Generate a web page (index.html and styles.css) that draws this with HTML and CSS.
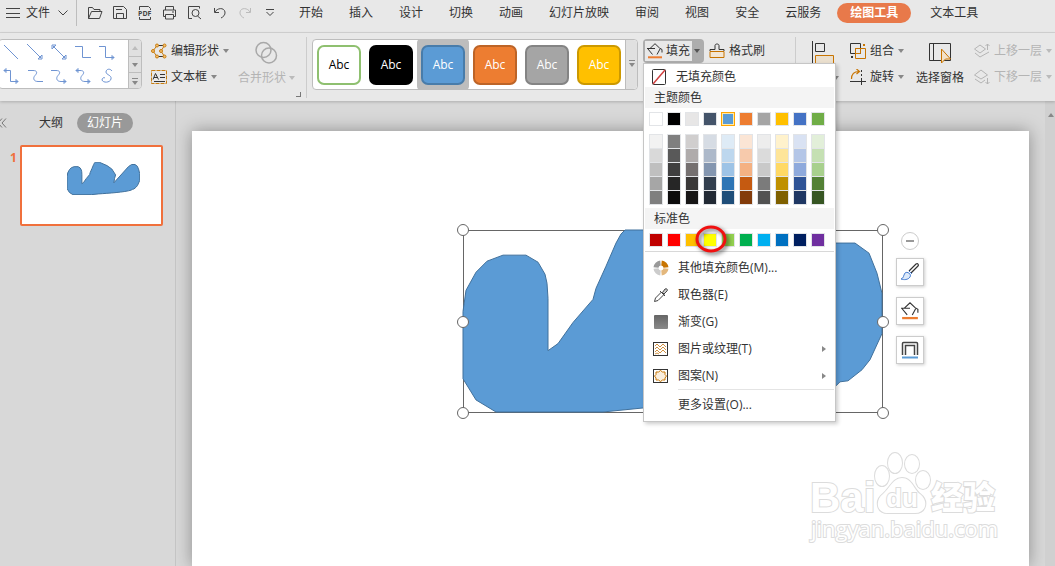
FILE: index.html
```html
<!DOCTYPE html>
<html lang="zh-CN">
<head>
  <meta charset="UTF-8">
  <meta name="viewport" content="width=device-width, initial-scale=1.0">
  <title>演示文稿</title>
  <link rel="stylesheet" href="styles.css">
</head>
<body>
  <svg class="defs" aria-hidden="true">
    <symbol id="freeform" viewBox="-1 -1 422 184" preserveAspectRatio="none">
      <path d="M0 81L3 60L13 42L24 31L40 25H63L75 32L82 44L84 53L85 68V120L95 113L110 92L130 69L133 58L143 36L153 13L158 4L162 0H185L230 19L258 38L280 71L274 90L270 115L355 24L373 13H392L406 23L414 43L419 63V103L407 129L399 139L385 150L377 151L373 155C330 168 240 173 180 177L140 181H33L13 169L0 148Z" fill="#5b9bd5" stroke="#41719c" vector-effect="non-scaling-stroke"/>
    </symbol>
    <symbol id="bucket" viewBox="0 0 16 16">
      <path d="M0 5.500h8M3 5.500L8 .7l4.500 4.300l2.500 1.500v3M13 6l-3 5.500M1 6l4.500 5.500" fill="none" stroke="#333"/>
      <path d="M1 14.300h14" stroke="#ed7d31" stroke-width="2"/>
    </symbol>
  </svg>

  <header class="menubar">
    <button class="file"><svg width="14" height="11" viewBox="0 0 14 11"><path d="M0 .5h14M0 5.500h14M0 9.500h14"/></svg>文件<svg class="file__chevron" width="10" height="6" viewBox="0 0 10 6"><path d="M.5.5L5 5L9.500.5"/></svg></button>
    <div class="quick">
      <button aria-label="打开"><svg width="16" height="14" viewBox="0 0 16 14"><path d="M1.500 12.500V1.500h4l1.500 2h6v2M1.500 12.500l3-7h10.500l-2.500 7z"/></svg></button>
      <button aria-label="保存"><svg width="16" height="14" viewBox="0 0 16 14"><path d="M1.500.5h10l3 3v9h-13zM4 3.500h6M4.500 12.500v-5h7v5"/></svg></button>
      <button aria-label="输出为PDF"><svg width="16" height="16" viewBox="0 0 16 16"><path d="M2.500 5V1.500h9l2 2V5M2.500 12v2.500h11V12"/><text x="1" y="11">PDF</text></svg></button>
      <button aria-label="打印"><svg width="16" height="14" viewBox="0 0 16 14"><path d="M3.500 4V.5h8V4M3.500 10.500h-2v-6.500h12v6.500h-2M3.500 8.500h8v4.500h-8zM10 6h2"/></svg></button>
      <button aria-label="打印预览"><svg width="16" height="14" viewBox="0 0 16 14"><path d="M5 12.500H1.500V.5h11v2M10.500 10l3.500 3"/><circle cx="8.500" cy="7" r="3.500"/></svg></button>
      <button aria-label="撤销"><svg width="14" height="12" viewBox="0 0 14 12"><path d="M1.500 1v4.500h4.500M2 5C4 1 11 0 12 5c.5 3-2 5-4 6"/></svg></button>
      <button aria-label="恢复" disabled><svg width="14" height="12" viewBox="0 0 14 12"><path d="M12.500 1v4.500H8M12 5C10 1 3 0 2 5c-.5 3 2 5 4 6"/></svg></button>
      <button aria-label="自定义快速访问工具栏"><svg width="8" height="8" viewBox="0 0 8 8"><path d="M0 .5h8M.5 3L4 6.500L7.500 3"/></svg></button>
    </div>
    <nav class="tabs">
      <a href="#">开始</a>
      <a href="#">插入</a>
      <a href="#">设计</a>
      <a href="#">切换</a>
      <a href="#">动画</a>
      <a href="#">幻灯片放映</a>
      <a href="#">审阅</a>
      <a href="#">视图</a>
      <a href="#">安全</a>
      <a href="#">云服务</a>
      <a href="#" class="is-active">绘图工具</a>
      <a href="#">文本工具</a>
    </nav>
  </header>

  <div class="ribbon">
    <div class="shapes">
      <div class="shapes__grid">
        <button aria-label="直线"><svg viewBox="0 0 16 16"><path d="M1 1l14 14"/></svg></button>
        <button aria-label="箭头"><svg viewBox="0 0 16 16"><path d="M0 0l14 14M15 11v4h-4z"/></svg></button>
        <button aria-label="双箭头"><svg viewBox="0 0 16 16"><path d="M2 2l12 12M15 11v4h-4zM1 5V1h4z"/></svg></button>
        <button aria-label="肘形连接符"><svg viewBox="0 0 16 16"><path d="M0 2.500h7.500v11H16"/></svg></button>
        <button aria-label="肘形箭头连接符"><svg viewBox="0 0 16 16"><path d="M0 2.500h6.500v11H15M13 11.500l2 2l-2 2z"/></svg></button>
        <button aria-label="肘形双箭头连接符"><svg viewBox="0 0 16 16"><path d="M1 2.500h6.500v11H15M13 11.500l2 2l-2 2zM3 .5l-2 2l2 2z"/></svg></button>
        <button aria-label="曲线连接符"><svg viewBox="0 0 16 16"><path d="M1 2.500h5c5 0 4 3 2 5s-2 6 3 6h5"/></svg></button>
        <button aria-label="曲线箭头连接符"><svg viewBox="0 0 16 16"><path d="M0 2.500h5c5 0 4 3 2 5s-2 6 3 6h5M13 11.500l2 2l-2 2z"/></svg></button>
        <button aria-label="曲线双箭头连接符"><svg viewBox="0 0 16 16"><path d="M1 2.500h4c5 0 4 3 2 5s-2 6 3 6h5M13 11.500l2 2l-2 2zM3 .5l-2 2l2 2z"/></svg></button>
        <button aria-label="曲线"><svg viewBox="0 0 16 16"><path d="M13 3C11 0 7 1 7 4s6 3 5 7s-8 4-9 1c0-2 2-3 3-2"/></svg></button>
      </div>
      <div class="shapes__scroll">
        <button class="is-off" aria-label="向上"><i class="caret caret--up"></i></button>
        <button aria-label="向下"><i class="caret"></i></button>
        <button aria-label="更多形状"><i class="caret caret--more"></i></button>
      </div>
    </div>

    <div class="stack stack--edit">
      <button class="tool"><svg width="16" height="16" viewBox="0 0 16 16"><path d="M6 2.500L2 8l4 5.500M13.500 2.500L10 8l3.500 5.500" fill="none" stroke="#c77d10"/><path d="M6 2.500h7M6 13.500h7" fill="none" stroke="#333"/><g fill="#f5c070" stroke="#c77d10"><circle cx="6" cy="2.500" r="1.500"/><circle cx="13.500" cy="2.500" r="1.500"/><circle cx="2" cy="8" r="1.500"/><circle cx="10" cy="8" r="1.500"/><circle cx="6" cy="13.500" r="1.500"/><circle cx="13.500" cy="13.500" r="1.500"/></g></svg>编辑形状<i class="caret"></i></button>
      <button class="tool"><svg width="16" height="16" viewBox="0 0 16 16"><path d="M.5 1.500h15v13H.5z" fill="none" stroke="#c77d10" stroke-dasharray="4 1"/><path d="M2 10.500L4.500 4.500L7.500 10.500M3 8.500h4M9 5.500h5M9 8.500h5M3 12.500h11" fill="none" stroke="#333"/></svg>文本框<i class="caret"></i></button>
    </div>

    <button class="tall tall--merge" disabled>
      <svg width="24" height="24" viewBox="0 0 24 24"><g fill="none" stroke="#a8a8a8" stroke-width="1.500"><circle cx="8.500" cy="9" r="7.500"/><circle cx="14" cy="14.500" r="7.500"/></g></svg>
      <span>合并形状<i class="caret"></i></span>
    </button>
    <i class="launcher"></i>

    <div class="styles">
      <button class="style style--outline"><span>Abc</span></button>
      <button class="style style--black"><span>Abc</span></button>
      <button class="style style--blue is-selected"><span>Abc</span></button>
      <button class="style style--orange"><span>Abc</span></button>
      <button class="style style--gray"><span>Abc</span></button>
      <button class="style style--gold"><span>Abc</span></button>
      <button class="styles__more" aria-label="更多样式"><i class="caret caret--more"></i></button>
    </div>

    <div class="fill">
      <div class="fill__split">
        <button class="fill__main"><svg width="16" height="16"><use href="#bucket"/></svg>填充</button>
        <button class="fill__drop" aria-label="填充选项"><i class="caret"></i></button>
      </div>

      <div class="picker">
        <button class="picker__none"><svg width="15" height="16" viewBox="0 0 15 16"><rect x=".5" y=".5" width="13" height="15" rx="1" fill="#fff" stroke="#333"/><path d="M1 15L13 1" stroke="#d04040" stroke-width="1.500"/></svg>无填充颜色</button>
        <h2>主题颜色</h2>
        <div class="swatches js-theme"></div>
        <div class="tints js-tints"></div>
        <h2>标准色</h2>
        <div class="swatches js-standard"></div>
        <ul>
          <li><button><svg width="16" height="16" viewBox="0 0 16 16"><g fill="none" stroke-width="5"><path d="M8.500 3A5 5 0 0 1 13 7.500" stroke="#c87400"/><path d="M13 8.500A5 5 0 0 1 8.500 13" stroke="#e3b77c"/><path d="M7.500 13A5 5 0 0 1 3 8.500" stroke="#ccc"/><path d="M3 7.500A5 5 0 0 1 7.500 3" stroke="#999"/></g></svg>其他填充颜色(M)...</button></li>
          <li><button><svg width="16" height="16" viewBox="0 0 16 16"><path d="M1.500 14.500l1-3.500L8.500 5l2.500 2.500L5 13.500z" fill="none" stroke="#444"/><path d="M7 4l5 5M9.500 5.500L12 2c2-1 3 1 2 2l-3 3z" fill="#ccc" stroke="#444"/></svg>取色器(E)</button></li>
          <li><button><svg width="16" height="16" viewBox="0 0 16 16"><defs><linearGradient id="shade" x2="0" y2="1"><stop stop-color="#666"/><stop offset="1" stop-color="#8a8a8a"/></linearGradient></defs><rect x="1" y="1" width="14" height="14" rx="1" fill="url(#shade)"/></svg>渐变(G)</button></li>
          <li><button><svg width="16" height="16" viewBox="0 0 16 16"><rect x=".5" y="1.500" width="14" height="13" fill="#fff" stroke="#333"/><path d="M2 5l2-2l3 3l3-3l3 3M2 8l2-2l3 3l3-3l3 3M2 11l2-2l3 3l3-3l3 3M2 13l2-1l2 1" fill="none" stroke="#d09040"/></svg>图片或纹理(T)<i class="submenu"></i></button></li>
          <li><button><svg width="16" height="16" viewBox="0 0 16 16"><rect x=".5" y="1.500" width="14" height="13" fill="#fff" stroke="#333"/><path d="M7.500 2.500l2 1.500h2.500v2.500L13.500 8L12 10v2H9.500L7.500 13.500L5.500 12H3V10L1.500 8L3 6.500V4h2.500z" fill="#faeedd" stroke="#c87400"/></svg>图案(N)<i class="submenu"></i></button></li>
          <li class="picker__more"><button>更多设置(O)...</button></li>
        </ul>
        <svg class="marker" width="36" height="32" viewBox="0 0 36 32"><ellipse cx="18" cy="16" rx="14" ry="12"/></svg>
      </div>
    </div>

    <div class="stack stack--brush">
      <button class="tool"><svg width="16" height="16" viewBox="0 0 16 16"><path d="M1 8V6.500h5V2.500c0-2 4-2 4 0v4h5V8" fill="none" stroke="#333"/><path d="M1 8.500h14v6H1z" fill="#f3e6d3" stroke="#c87400"/></svg>格式刷</button>
    </div>

    <button class="tall tall--align">
      <svg width="24" height="24" viewBox="0 0 24 24"><path d="M1.500 0v24M4.500 2.500h9v8h-9z" fill="none" stroke="#333"/><path d="M4.500 14.500h18v8h-18z" fill="#eadfce" stroke="#c87400"/></svg>
      <span>对齐<i class="caret"></i></span>
    </button>

    <div class="stack stack--arrange">
      <button class="tool"><svg width="16" height="16" viewBox="0 0 16 16"><path d="M.5.5h10v10H.5z" fill="none" stroke="#333"/><path d="M5.500 5.500h10v10h-10zM5.500 5.500h5v5h-5z" fill="none" stroke="#c87400"/><path d="M13 1h2v2h-2z" fill="#c87400"/><path d="M1 13h2v2H1z" fill="#333"/></svg>组合<i class="caret"></i></button>
      <button class="tool"><svg width="16" height="16" viewBox="0 0 16 16"><path d="M1.500 10C1.500 5 4 2.500 9 2.500M6.500 0l3 2.500l-3 2.500" fill="none" stroke="#c87400" stroke-width="1.200"/><path d="M0 12.500h16M11.500 10v6" fill="none" stroke="#333"/><path d="M11.500 1v9" stroke="#333" stroke-dasharray="2 2"/></svg>旋转<i class="caret"></i></button>
    </div>

    <button class="tall tall--pane">
      <svg width="24" height="24" viewBox="0 0 24 24"><path d="M1.500 2.500h21v17h-21zM5.500 2.500v17" fill="none" stroke="#333"/><path d="M13.500 8l9 10h-5l-4 4z" fill="#f3e2c8" stroke="#c87400"/></svg>
      <span>选择窗格</span>
    </button>

    <div class="stack stack--layer">
      <button class="tool" disabled><svg width="16" height="16" viewBox="0 0 16 16"><path d="M.5 6L6 2l5.500 4L6 10zM1 10l5 4l9-5M13.500 7V1M11.500 3l2-2l2 2" fill="none" stroke="#b4b4b4"/></svg>上移一层<i class="caret"></i></button>
      <button class="tool" disabled><svg width="16" height="16" viewBox="0 0 16 16"><path d="M.5 6L7 1l6.500 5L7 10zM1 10l6 4l4-3M13.500 9v6M11.500 13l2 2l2-2" fill="none" stroke="#b4b4b4"/></svg>下移一层<i class="caret"></i></button>
    </div>
  </div>

  <main class="workspace">
    <aside class="outline">
      <div class="outline__head">
        <button class="outline__fold" aria-label="折叠"><svg width="8" height="10" viewBox="0 0 8 10"><path d="M2 .5L-2 5l4 4.500M6 .5L2 5l4 4.500" fill="none" stroke="#777"/></svg></button>
        <button>大纲</button>
        <button class="is-active">幻灯片</button>
      </div>
      <div class="thumb">
        <span class="thumb__number">1</span>
        <button class="thumb__slide" aria-label="幻灯片 1"><svg><use href="#freeform"/></svg></button>
      </div>
    </aside>

    <section class="stage">
      <div class="slide">
        <div class="selection">
          <svg class="selection__shape"><use href="#freeform"/></svg>
          <i class="handle handle--nw"></i>
          <i class="handle handle--ne"></i>
          <i class="handle handle--w"></i>
          <i class="handle handle--e"></i>
          <i class="handle handle--sw"></i>
          <i class="handle handle--se"></i>
        </div>

        <div class="floating">
          <button class="floating__fold" aria-label="收起"></button>
          <button aria-label="形状样式"><svg width="20" height="20" viewBox="0 0 20 20"><path d="M9 9l7-7c2-1 3 1 2 2l-7 7" fill="#fff" stroke="#333" stroke-width="1.200"/><path d="M1 17c3-1 2-3 4-6c2-2 7 1 5 4s-6 3-9 2zM9 9l3 3" fill="#dce9fa" stroke="#4a7fd0"/></svg></button>
          <button aria-label="形状填充"><svg width="18" height="18"><use href="#bucket"/></svg></button>
          <button aria-label="形状轮廓"><svg width="20" height="20" viewBox="0 0 20 20"><path d="M2.500 15V3.500q0-1 1-1h13q1 0 1 1V15M5.500 15V5.500h9V15" fill="none" stroke="#444" stroke-width="1.500"/><path d="M2 17.500h16" stroke="#5b9bd5" stroke-width="2"/></svg></button>
        </div>

        <svg class="watermark" width="200" height="100" viewBox="0 0 200 100">
          <text x="2" y="61" class="watermark__bai">Bai</text>
          <g>
            <ellipse cx="74" cy="25" rx="7" ry="10"/>
            <ellipse cx="87" cy="12" rx="7" ry="10"/>
            <ellipse cx="104" cy="13" rx="7" ry="9"/>
            <ellipse cx="115" cy="29" rx="7" ry="9"/>
            <path d="M94 27c10 0 12 12 18 16c9 7 6 19-5 19H80c-12 0-13-13-5-19c7-6 10-16 19-16z"/>
          </g>
          <text x="78" y="56" class="watermark__du">du</text>
          <text x="123" y="58" class="watermark__jy">经验</text>
          <text x="3" y="86" class="watermark__url">jingyan.baidu.com</text>
        </svg>
      </div>
      <div class="scrollbar"><i class="caret caret--up"></i></div>
    </section>
  </main>

  <script src="main.js"></script>
</body>
</html>
```
FILE: styles.css
```css
:root {
  --bar: #e8e8e8;
  --desk: #d8d8d8;
  --line: #bdbdbd;
  --text: #333;
  --accent: #e8794a;
}

* {
  box-sizing: border-box;
}

html, body {
  height: 100%;
}

body {
  display: flex;
  flex-direction: column;
  margin: 0;
  overflow: hidden;
  background: var(--desk);
  color: var(--text);
  font: 12px/20px 'Open Sans', 'Noto Sans CJK SC', sans-serif;
}

button {
  margin: 0;
  padding: 0;
  border: 0;
  background: none;
  color: inherit;
  font: inherit;
  white-space: nowrap;
}

button:disabled {
  color: #b4b4b4;
}

a {
  color: inherit;
  text-decoration: none;
}

svg {
  display: block;
  flex: none;
}

.defs {
  position: absolute;
  width: 0;
  height: 0;
}

.caret {
  flex: none;
  width: 0;
  height: 0;
  border: 3px solid transparent;
  border-top: 4px solid #888;
  border-bottom: 0;
}

button:disabled .caret {
  border-top-color: #bbb;
}

.caret--up {
  border-top: 0;
  border-bottom: 4px solid #888;
}

.caret--more {
  position: relative;
}

.caret--more::before {
  content: '';
  position: absolute;
  top: -7px;
  left: -3px;
  width: 6px;
  height: 1px;
  background: #888;
}

/* menu bar */

.menubar {
  display: flex;
  align-items: center;
  flex: none;
  height: 33px;
  padding-bottom: 6px;
  border-bottom: 1px solid #d4d4d4;
  background: var(--bar);
}

.menubar svg {
  fill: none;
  stroke: #444;
}

.menubar text {
  fill: #444;
  stroke: none;
  font-size: 7px;
  font-weight: 700;
}

.menubar button:disabled svg {
  stroke: #bbb;
}

.file {
  display: flex;
  align-items: center;
  gap: 6px;
  width: 77px;
  height: 26px;
  padding-left: 6px;
  border-right: 1px solid var(--line);
}

.file__chevron {
  margin-left: 2px;
}

.quick {
  display: flex;
  width: 222px;
  padding-left: 5px;
}

.quick button {
  display: flex;
  align-items: center;
  justify-content: center;
  width: 25px;
  height: 26px;
}

.tabs {
  display: flex;
  gap: 26px;
  white-space: nowrap;
}

.tabs .is-active {
  margin: 0 -7px 0 -10px;
  padding: 0 13px;
  border-radius: 10px;
  background: var(--accent);
  color: #fff;
  font-weight: 700;
}

/* ribbon */

.ribbon {
  position: relative;
  z-index: 2;
  display: flex;
  align-items: flex-start;
  flex: none;
  height: 68px;
  padding-top: 6px;
  background: var(--bar);
  box-shadow: 0 1px 3px rgba(0, 0, 0, 0.2);
}

.ribbon > * {
  flex: none;
}

.shapes {
  display: flex;
  width: 144px;
  height: 50px;
  margin-left: -2px;
  border: 1px solid var(--line);
  border-radius: 4px;
  background: #fff;
  overflow: hidden;
}

.shapes__grid {
  display: grid;
  grid-template-columns: repeat(5, 24px);
  grid-template-rows: 24px 24px;
  flex: 1;
}

.shapes__grid button {
  display: grid;
  place-items: center;
}

.shapes__grid svg {
  width: 16px;
  height: 16px;
  fill: none;
  stroke: #6f94d2;
}

.shapes__scroll {
  display: grid;
  grid-template-rows: repeat(3, 16px);
  width: 13px;
  border-left: 1px solid var(--line);
  background: #e0e0e0;
}

.shapes__scroll button {
  display: grid;
  place-items: center;
}

.shapes__scroll button + button {
  border-top: 1px solid var(--line);
}

.shapes__scroll .caret--more {
  margin-top: 4px;
}

.shapes__scroll .is-off {
  opacity: 0.4;
}

.stack {
  display: grid;
  grid-auto-rows: 26px;
  margin-top: -1px;
}

.stack--edit {
  width: 83px;
  margin-left: 9px;
}

.tool {
  display: flex;
  align-items: center;
  gap: 4px;
}

.tall {
  display: flex;
  flex-direction: column;
  align-items: center;
  gap: 3px;
  padding-top: 2px;
}

.tall span {
  display: flex;
  align-items: center;
  gap: 3px;
}

.tall--merge {
  margin-left: 4px;
}

.launcher {
  align-self: flex-end;
  width: 5px;
  height: 5px;
  margin: 0 6px 4px 1px;
  border: solid #777;
  border-width: 0 1px 1px 0;
}

.styles {
  position: relative;
  display: flex;
  width: 326px;
  height: 51px;
  margin-left: 5px;
  border: 1px solid var(--line);
  border-radius: 4px;
  background: #fff;
}

.styles::before {
  content: '';
  position: absolute;
  top: -3px;
  left: -7px;
  width: 1px;
  height: 61px;
  background: #ccc;
}

.style {
  display: grid;
  place-items: center;
  width: 52px;
  color: #fff;
}

.style.is-selected {
  margin: -1px 0;
  border-radius: 4px;
  background: var(--line);
}

.style span {
  width: 44px;
  height: 40px;
  border: 2px solid rgba(0, 0, 0, 0.2);
  border-radius: 7px;
  line-height: 36px;
}

.style--outline span {
  border-color: #8fc070;
  color: #000;
}

.style--black span {
  background: #000;
}

.style--blue span {
  background: #5b9bd5;
}

.style--orange span {
  background: #ed7d31;
}

.style--gray span {
  background: #a5a5a5;
}

.style--gold span {
  background: #ffc000;
}

.styles__more {
  display: grid;
  place-items: center;
  flex: 1;
  border-left: 1px solid var(--line);
  border-radius: 0 4px 4px 0;
  background: #e0e0e0;
}

.fill {
  position: relative;
  margin-left: 5px;
}

.fill__split {
  display: flex;
  width: 61px;
  height: 24px;
  padding: 2px;
  border-radius: 4px;
  background: #adadad;
}

.fill__main {
  display: flex;
  align-items: center;
  gap: 3px;
  padding-left: 2px;
  width: 47px;
  background: var(--bar);
}

.fill__drop {
  display: grid;
  place-items: center;
  flex: 1;
}

.fill__drop .caret {
  border-top-color: #555;
}

.stack--brush {
  width: 86px;
  margin-left: 5px;
}

.tall--align {
  align-self: stretch;
  margin: -2px 0 2px;
  padding: 4px 6px 0 10px;
  border-left: 1px solid #ccc;
}

.stack--arrange {
  margin-left: 5px;
}

.tall--pane {
  margin-left: 12px;
}

.stack--layer {
  margin-left: 10px;
}

/* fill colour menu */

.picker {
  position: absolute;
  top: 24px;
  left: 0;
  width: 193px;
  padding: 2px 1px;
  border: 1px solid #c6c6c6;
  background: #fff;
  box-shadow: 2px 2px 4px rgba(0, 0, 0, 0.2);
}

.picker__none {
  display: flex;
  align-items: center;
  gap: 9px;
  width: 100%;
  height: 21px;
  padding-left: 7px;
}

.picker h2 {
  margin: 0;
  padding-left: 9px;
  background: #f4f4f4;
  font: inherit;
  line-height: 21px;
}

.swatches,
.tints {
  display: grid;
  grid-template-columns: repeat(10, 14px);
  gap: 4px;
  padding: 4px 4px 0;
}

.swatch {
  height: 14px;
  border: 1px solid #e2e4e7;
}

.swatch.is-selected {
  border-color: #ffa500;
  box-shadow: inset 0 0 0 1px #ffe9a8;
}

.tints {
  padding: 8px 4px 3px;
}

.tints__column {
  display: grid;
  grid-auto-rows: 13px;
  gap: 1px;
  padding: 1px;
  background: #e2e4e7;
}

.picker ul {
  margin: 4px 0 0;
  padding: 2px 0 0;
  border-top: 1px solid #d8d8d8;
  list-style: none;
}

.picker li button {
  display: flex;
  align-items: center;
  gap: 9px;
  width: 100%;
  height: 27px;
  padding: 0 8px;
}

.submenu {
  margin-left: auto;
  border: 3px solid transparent;
  border-right: 0;
  border-left: 4px solid #888;
}

.picker .picker__more {
  margin-left: 33px;
  border-top: 1px solid #e4e4e4;
}

.picker .picker__more button {
  height: 29px;
  padding: 0;
}

.marker {
  position: absolute;
  top: 159px;
  left: 49px;
  fill: none;
  stroke: #f01010;
  stroke-width: 3;
  filter: drop-shadow(2px 2px 2px rgba(0, 0, 0, 0.6));
  pointer-events: none;
}

/* workspace */

.workspace {
  display: flex;
  flex: 1;
  min-height: 0;
}

.outline {
  flex: none;
  width: 176px;
  border-right: 1px solid #c4c4c4;
}

.outline__head {
  display: flex;
  align-items: center;
  padding-top: 12px;
}

.outline__head .is-active {
  margin-left: 14px;
  padding: 0 10px;
  border-radius: 10px;
  background: #999;
  color: #fff;
}

.outline__fold {
  width: 39px;
}

.thumb {
  display: flex;
  padding: 12px 0 0 10px;
}

.thumb__number {
  width: 10px;
  padding-top: 3px;
  color: #f0703c;
  font-weight: 700;
}

.thumb__slide {
  display: flex;
  align-items: flex-start;
  width: 143px;
  height: 81px;
  padding: 15px 0 0 45px;
  border: 2px solid #f0703c;
  border-radius: 2px;
  background: #fff;
}

.thumb__slide svg {
  width: 73px;
  height: 33px;
}

.stage {
  position: relative;
  display: flex;
  flex: 1;
  padding: 30px 0 0 16px;
  overflow: hidden;
}

.slide {
  position: relative;
  flex: 1;
  margin-right: 26px;
  background: #fff;
  box-shadow: 0 0 16px rgba(0, 0, 0, 0.35);
}

.scrollbar {
  position: absolute;
  top: 0;
  right: 0;
  bottom: 0;
  width: 10px;
  padding: 12px 0 0 3px;
  background: #d0d0d0;
}

.scrollbar .caret {
  display: block;
}

.selection {
  position: absolute;
  top: 99px;
  left: 271px;
  width: 420px;
  height: 183px;
  border: 1px solid #666;
}

.selection__shape {
  width: 422px;
  height: 185px;
  margin: -2px;
}

.handle {
  position: absolute;
  width: 12px;
  height: 12px;
  border: 1px solid #666;
  border-radius: 50%;
  background: #fff;
}

.handle--nw,
.handle--ne {
  top: -7px;
}

.handle--w,
.handle--e {
  top: calc(50% - 6px);
}

.handle--sw,
.handle--se {
  bottom: -7px;
}

.handle--nw,
.handle--w,
.handle--sw {
  left: -7px;
}

.handle--ne,
.handle--e,
.handle--se {
  right: -7px;
}

.floating {
  position: absolute;
  top: 101px;
  left: 704px;
  display: flex;
  flex-direction: column;
  align-items: center;
  gap: 11px;
}

.floating button {
  display: grid;
  place-items: center;
  width: 28px;
  height: 28px;
  border: 1px solid #ccc;
  background: #fff;
  box-shadow: 1px 1px 3px rgba(0, 0, 0, 0.2);
}

.floating .floating__fold {
  width: 18px;
  height: 18px;
  margin-bottom: -3px;
  border-radius: 50%;
  box-shadow: none;
}

.floating__fold::before {
  content: '';
  width: 8px;
  height: 2px;
  background: #999;
}

.watermark {
  position: absolute;
  top: 320px;
  right: 21px;
  fill: #fff;
  stroke: #dcdcdc;
  stroke-width: 2;
  paint-order: stroke;
  font-family: 'Open Sans', 'Noto Sans CJK SC', sans-serif;
}

.watermark__bai {
  font: 700 42px 'Liberation Sans', sans-serif;
}

.watermark__du {
  font: 700 26px 'Liberation Sans', sans-serif;
}

.watermark__jy {
  font-size: 32px;
  font-weight: 900;
}

.watermark__url {
  font-size: 22px;
}
```
FILE: main.js
```js
const theme = ['#ffffff', '#000000', '#e7e6e6', '#44546a', '#5b9bd5', '#ed7d31', '#a5a5a5', '#ffc000', '#4472c4', '#70ad47'];

const tints = [
  ['#f2f2f2', '#d9d9d9', '#bfbfbf', '#a6a6a6', '#7f7f7f'],
  ['#7f7f7f', '#595959', '#3f3f3f', '#262626', '#0c0c0c'],
  ['#d0cece', '#afabab', '#757070', '#3a3838', '#171616'],
  ['#d6dce4', '#adb9ca', '#8496b0', '#333f4f', '#222a35'],
  ['#deebf6', '#bdd7ee', '#9dc3e6', '#2e75b5', '#1f4e79'],
  ['#fbe5d5', '#f7caac', '#f4b183', '#c55a11', '#833c0b'],
  ['#ededed', '#dbdbdb', '#c9c9c9', '#7b7b7b', '#525252'],
  ['#fff2cc', '#fee599', '#ffd965', '#bf9000', '#7f6000'],
  ['#d9e2f3', '#b4c6e7', '#8faadc', '#2f5496', '#203864'],
  ['#e2efd9', '#c5e0b3', '#a8d08d', '#538135', '#375623']
];

const standard = ['#c00000', '#ff0000', '#ffc000', '#ffff00', '#92d050', '#00b050', '#00b0f0', '#0070c0', '#002060', '#7030a0'];

function addColors(parent, colors, className) {
  colors.forEach(color => {
    const button = document.createElement('button');
    button.className = className;
    button.style.backgroundColor = color;
    button.setAttribute('aria-label', color);
    parent.appendChild(button);
  });
}

const themeRow = document.querySelector('.js-theme');
addColors(themeRow, theme, 'swatch');
themeRow.children[4].classList.add('is-selected');

addColors(document.querySelector('.js-standard'), standard, 'swatch');

tints.forEach(colors => {
  const column = document.createElement('div');
  column.className = 'tints__column';
  addColors(column, colors, 'tints__cell');
  document.querySelector('.js-tints').appendChild(column);
});
```
